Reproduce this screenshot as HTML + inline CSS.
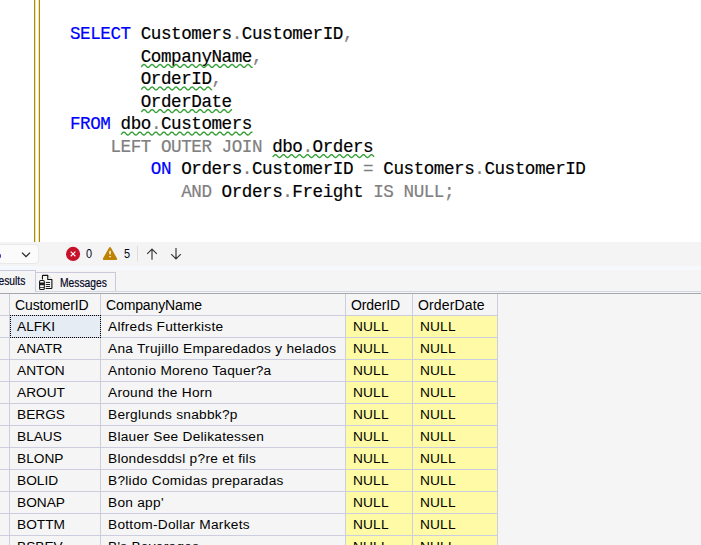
<!DOCTYPE html>
<html>
<head>
<meta charset="utf-8">
<title>SQL Query</title>
<style>
html,body{margin:0;padding:0;}
body{width:701px;height:545px;overflow:hidden;background:#fff;position:relative;font-family:"Liberation Sans",sans-serif;}
#editor{position:absolute;left:0;top:0;width:701px;height:242px;background:#fff;overflow:hidden;}
#bar{position:absolute;left:34px;top:0;width:4px;height:242px;border-left:1px solid #ae8b00;border-right:1px solid #ae8b00;background:linear-gradient(to right,#efe3b0 0,#efe3b0 1px,#fff 1px,#fff 3px,#efe3b0 3px,#efe3b0 4px);}
#code{position:absolute;left:70px;top:23.0px;margin:0;font-family:"Liberation Mono","DejaVu Sans Mono",monospace;font-size:17.6px;letter-spacing:-0.452px;line-height:22.54px;color:#000;white-space:pre;-webkit-text-stroke:0.18px;}
#code .k{color:#0000ff;}
#code .g{color:#808080;}
#status{position:absolute;left:0;top:242px;width:701px;height:24px;background:#f4f4f4;}
.num{position:absolute;top:4.2px;font-size:13px;color:#04041c;transform-origin:0 0;transform:scaleX(0.84);}
#band{position:absolute;left:0;top:266px;width:701px;height:4px;background:#f5f8fc;}
#combo{position:absolute;left:-6px;top:2px;width:45px;height:20px;border:1px solid #e9e9e9;border-radius:4px;background:#fbfbfb;box-sizing:border-box;}
#tabs{position:absolute;left:0;top:270px;width:701px;height:23px;background:#f5f5f5;}
.tab{position:absolute;box-sizing:border-box;border:1px solid #c8cadc;border-bottom:none;font-size:12px;color:#050525;}
#t1{left:-12px;top:0px;width:48px;height:22px;background:#f5f5f5;}
#t2{left:35px;top:2px;width:81px;height:20px;background:#f5f5f5;}
.tab span{position:absolute;white-space:nowrap;-webkit-text-stroke:0.2px;transform-origin:0 0;transform:scaleX(0.857);}
#t1 span{left:2px;top:2.9px;}
#t2 span{left:24.2px;top:2.6px;}
#tline{position:absolute;left:36px;top:21px;width:665px;height:1px;background:#d4d6e4;}
#grid{position:absolute;left:0;top:293px;width:701px;height:252px;background:#f5f5f5;border-top:1px solid #a6a6ae;box-sizing:border-box;overflow:hidden;}
table{border-collapse:collapse;position:absolute;left:-1px;top:-1px;font-size:13.7px;letter-spacing:0.17px;color:#000;table-layout:fixed;}
td,th{border:1px solid #cdcde0;height:21px;padding:0 0 0 7px;white-space:nowrap;overflow:hidden;text-align:left;font-weight:normal;box-sizing:border-box;background:#f5f5f5;}
th{padding-left:5px;padding-top:3px;font-size:14px;letter-spacing:-0.12px;border-top:none;}
td.n{background:#fffaa5;}
td.sel{background:#e6ecf4;}
tr{height:22px;}
#focus{position:absolute;left:10px;top:21px;width:91px;height:23px;box-sizing:border-box;border:1px dotted #000;}
</style>
</head>
<body>
<div id="editor">
<div id="bar"></div>
<pre id="code"><span class="k">SELECT</span> Customers<span class="g">.</span>CustomerID<span class="g">,</span>
       <span class="w">CompanyName</span><span class="g">,</span>
       <span class="w">OrderID</span><span class="g">,</span>
       <span class="w">OrderDate</span>
<span class="k">FROM</span> <span class="w">dbo<span class="g">.</span>Customers</span>
    <span class="g">LEFT OUTER JOIN</span> <span class="w">dbo<span class="g">.</span>Orders</span>
        <span class="k">ON</span> Orders<span class="g">.</span>CustomerID <span class="g">=</span> Customers<span class="g">.</span>CustomerID
           <span class="g">AND</span> Orders<span class="g">.</span>Freight <span class="g">IS NULL;</span></pre>
<svg width="701" height="242" style="position:absolute;left:0;top:0">
<polyline points="141.17,66.88 141.67,66.39 142.17,65.83 142.67,65.28 143.17,64.84 143.67,64.56 144.17,64.49 144.67,64.65 145.17,65.00 145.67,65.49 146.17,66.05 146.67,66.60 147.17,67.04 147.67,67.32 148.17,67.39 148.67,67.23 149.17,66.88 149.67,66.39 150.17,65.83 150.67,65.28 151.17,64.84 151.67,64.56 152.17,64.49 152.67,64.65 153.17,65.00 153.67,65.49 154.17,66.05 154.67,66.60 155.17,67.04 155.67,67.32 156.17,67.39 156.67,67.23 157.17,66.88 157.67,66.39 158.17,65.83 158.67,65.28 159.17,64.84 159.67,64.56 160.17,64.49 160.67,64.65 161.17,65.00 161.67,65.49 162.17,66.05 162.67,66.60 163.17,67.04 163.67,67.32 164.17,67.39 164.67,67.23 165.17,66.88 165.67,66.39 166.17,65.83 166.67,65.28 167.17,64.84 167.67,64.56 168.17,64.49 168.67,64.65 169.17,65.00 169.67,65.49 170.17,66.05 170.67,66.60 171.17,67.04 171.67,67.32 172.17,67.39 172.67,67.23 173.17,66.88 173.67,66.39 174.17,65.83 174.67,65.28 175.17,64.84 175.67,64.56 176.17,64.49 176.67,64.65 177.17,65.00 177.67,65.49 178.17,66.05 178.67,66.60 179.17,67.04 179.67,67.32 180.17,67.39 180.67,67.23 181.17,66.88 181.67,66.39 182.17,65.83 182.67,65.28 183.17,64.84 183.67,64.56 184.17,64.49 184.67,64.65 185.17,65.00 185.67,65.49 186.17,66.05 186.67,66.60 187.17,67.04 187.67,67.32 188.17,67.39 188.67,67.23 189.17,66.88 189.67,66.39 190.17,65.83 190.67,65.28 191.17,64.84 191.67,64.56 192.17,64.49 192.67,64.65 193.17,65.00 193.67,65.49 194.17,66.05 194.67,66.60 195.17,67.04 195.67,67.32 196.17,67.39 196.67,67.23 197.17,66.88 197.67,66.39 198.17,65.83 198.67,65.28 199.17,64.84 199.67,64.56 200.17,64.49 200.67,64.65 201.17,65.00 201.67,65.49 202.17,66.05 202.67,66.60 203.17,67.04 203.67,67.32 204.17,67.39 204.67,67.23 205.17,66.88 205.67,66.39 206.17,65.83 206.67,65.28 207.17,64.84 207.67,64.56 208.17,64.49 208.67,64.65 209.17,65.00 209.67,65.49 210.17,66.05 210.67,66.60 211.17,67.04 211.67,67.32 212.17,67.39 212.67,67.23 213.17,66.88 213.67,66.39 214.17,65.83 214.67,65.28 215.17,64.84 215.67,64.56 216.17,64.49 216.67,64.65 217.17,65.00 217.67,65.49 218.17,66.05 218.67,66.60 219.17,67.04 219.67,67.32 220.17,67.39 220.67,67.23 221.17,66.88 221.67,66.39 222.17,65.83 222.67,65.28 223.17,64.84 223.67,64.56 224.17,64.49 224.67,64.65 225.17,65.00 225.67,65.49 226.17,66.05 226.67,66.60 227.17,67.04 227.67,67.32 228.17,67.39 228.67,67.23 229.17,66.88 229.67,66.39 230.17,65.83 230.67,65.28 231.17,64.84 231.67,64.56 232.17,64.49 232.67,64.65 233.17,65.00 233.67,65.49 234.17,66.05 234.67,66.60 235.17,67.04 235.67,67.32 236.17,67.39 236.67,67.23 237.17,66.88 237.67,66.39 238.17,65.83 238.67,65.28 239.17,64.84 239.67,64.56 240.17,64.49 240.67,64.65 241.17,65.00 241.67,65.49 242.17,66.05 242.67,66.60 243.17,67.04 243.67,67.32 244.17,67.39 244.67,67.23 245.17,66.88 245.67,66.39 246.17,65.83 246.67,65.28 247.17,64.84 247.67,64.56 248.17,64.49 248.67,64.65 249.17,65.00 249.67,65.49 250.17,66.05 250.67,66.60 251.17,67.04 251.67,67.32 252.17,67.39 252.67,67.23" fill="none" stroke="#3aa13a" stroke-width="1.4" stroke-linejoin="round"/>
<polyline points="141.17,89.42 141.67,88.93 142.17,88.37 142.67,87.82 143.17,87.38 143.67,87.10 144.17,87.03 144.67,87.19 145.17,87.54 145.67,88.03 146.17,88.59 146.67,89.14 147.17,89.58 147.67,89.86 148.17,89.93 148.67,89.77 149.17,89.42 149.67,88.93 150.17,88.37 150.67,87.82 151.17,87.38 151.67,87.10 152.17,87.03 152.67,87.19 153.17,87.54 153.67,88.03 154.17,88.59 154.67,89.14 155.17,89.58 155.67,89.86 156.17,89.93 156.67,89.77 157.17,89.42 157.67,88.93 158.17,88.37 158.67,87.82 159.17,87.38 159.67,87.10 160.17,87.03 160.67,87.19 161.17,87.54 161.67,88.03 162.17,88.59 162.67,89.14 163.17,89.58 163.67,89.86 164.17,89.93 164.67,89.77 165.17,89.42 165.67,88.93 166.17,88.37 166.67,87.82 167.17,87.38 167.67,87.10 168.17,87.03 168.67,87.19 169.17,87.54 169.67,88.03 170.17,88.59 170.67,89.14 171.17,89.58 171.67,89.86 172.17,89.93 172.67,89.77 173.17,89.42 173.67,88.93 174.17,88.37 174.67,87.82 175.17,87.38 175.67,87.10 176.17,87.03 176.67,87.19 177.17,87.54 177.67,88.03 178.17,88.59 178.67,89.14 179.17,89.58 179.67,89.86 180.17,89.93 180.67,89.77 181.17,89.42 181.67,88.93 182.17,88.37 182.67,87.82 183.17,87.38 183.67,87.10 184.17,87.03 184.67,87.19 185.17,87.54 185.67,88.03 186.17,88.59 186.67,89.14 187.17,89.58 187.67,89.86 188.17,89.93 188.67,89.77 189.17,89.42 189.67,88.93 190.17,88.37 190.67,87.82 191.17,87.38 191.67,87.10 192.17,87.03 192.67,87.19 193.17,87.54 193.67,88.03 194.17,88.59 194.67,89.14 195.17,89.58 195.67,89.86 196.17,89.93 196.67,89.77 197.17,89.42 197.67,88.93 198.17,88.37 198.67,87.82 199.17,87.38 199.67,87.10 200.17,87.03 200.67,87.19 201.17,87.54 201.67,88.03 202.17,88.59 202.67,89.14 203.17,89.58 203.67,89.86 204.17,89.93 204.67,89.77 205.17,89.42 205.67,88.93 206.17,88.37 206.67,87.82 207.17,87.38 207.67,87.10 208.17,87.03 208.67,87.19 209.17,87.54 209.67,88.03 210.17,88.59 210.67,89.14 211.17,89.58 211.67,89.86 212.17,89.93" fill="none" stroke="#3aa13a" stroke-width="1.4" stroke-linejoin="round"/>
<polyline points="141.17,111.96 141.67,111.47 142.17,110.91 142.67,110.36 143.17,109.92 143.67,109.64 144.17,109.57 144.67,109.73 145.17,110.08 145.67,110.57 146.17,111.13 146.67,111.68 147.17,112.12 147.67,112.40 148.17,112.47 148.67,112.31 149.17,111.96 149.67,111.47 150.17,110.91 150.67,110.36 151.17,109.92 151.67,109.64 152.17,109.57 152.67,109.73 153.17,110.08 153.67,110.57 154.17,111.13 154.67,111.68 155.17,112.12 155.67,112.40 156.17,112.47 156.67,112.31 157.17,111.96 157.67,111.47 158.17,110.91 158.67,110.36 159.17,109.92 159.67,109.64 160.17,109.57 160.67,109.73 161.17,110.08 161.67,110.57 162.17,111.13 162.67,111.68 163.17,112.12 163.67,112.40 164.17,112.47 164.67,112.31 165.17,111.96 165.67,111.47 166.17,110.91 166.67,110.36 167.17,109.92 167.67,109.64 168.17,109.57 168.67,109.73 169.17,110.08 169.67,110.57 170.17,111.13 170.67,111.68 171.17,112.12 171.67,112.40 172.17,112.47 172.67,112.31 173.17,111.96 173.67,111.47 174.17,110.91 174.67,110.36 175.17,109.92 175.67,109.64 176.17,109.57 176.67,109.73 177.17,110.08 177.67,110.57 178.17,111.13 178.67,111.68 179.17,112.12 179.67,112.40 180.17,112.47 180.67,112.31 181.17,111.96 181.67,111.47 182.17,110.91 182.67,110.36 183.17,109.92 183.67,109.64 184.17,109.57 184.67,109.73 185.17,110.08 185.67,110.57 186.17,111.13 186.67,111.68 187.17,112.12 187.67,112.40 188.17,112.47 188.67,112.31 189.17,111.96 189.67,111.47 190.17,110.91 190.67,110.36 191.17,109.92 191.67,109.64 192.17,109.57 192.67,109.73 193.17,110.08 193.67,110.57 194.17,111.13 194.67,111.68 195.17,112.12 195.67,112.40 196.17,112.47 196.67,112.31 197.17,111.96 197.67,111.47 198.17,110.91 198.67,110.36 199.17,109.92 199.67,109.64 200.17,109.57 200.67,109.73 201.17,110.08 201.67,110.57 202.17,111.13 202.67,111.68 203.17,112.12 203.67,112.40 204.17,112.47 204.67,112.31 205.17,111.96 205.67,111.47 206.17,110.91 206.67,110.36 207.17,109.92 207.67,109.64 208.17,109.57 208.67,109.73 209.17,110.08 209.67,110.57 210.17,111.13 210.67,111.68 211.17,112.12 211.67,112.40 212.17,112.47 212.67,112.31 213.17,111.96 213.67,111.47 214.17,110.91 214.67,110.36 215.17,109.92 215.67,109.64 216.17,109.57 216.67,109.73 217.17,110.08 217.67,110.57 218.17,111.13 218.67,111.68 219.17,112.12 219.67,112.40 220.17,112.47 220.67,112.31 221.17,111.96 221.67,111.47 222.17,110.91 222.67,110.36 223.17,109.92 223.67,109.64 224.17,109.57 224.67,109.73 225.17,110.08 225.67,110.57 226.17,111.13 226.67,111.68 227.17,112.12 227.67,112.40 228.17,112.47 228.67,112.31 229.17,111.96 229.67,111.47 230.17,110.91 230.67,110.36 231.17,109.92 231.67,109.64 232.17,109.57" fill="none" stroke="#3aa13a" stroke-width="1.4" stroke-linejoin="round"/>
<polyline points="120.95,134.50 121.45,134.01 121.95,133.45 122.45,132.90 122.95,132.46 123.45,132.18 123.95,132.11 124.45,132.27 124.95,132.62 125.45,133.11 125.95,133.67 126.45,134.22 126.95,134.66 127.45,134.94 127.95,135.01 128.45,134.85 128.95,134.50 129.45,134.01 129.95,133.45 130.45,132.90 130.95,132.46 131.45,132.18 131.95,132.11 132.45,132.27 132.95,132.62 133.45,133.11 133.95,133.67 134.45,134.22 134.95,134.66 135.45,134.94 135.95,135.01 136.45,134.85 136.95,134.50 137.45,134.01 137.95,133.45 138.45,132.90 138.95,132.46 139.45,132.18 139.95,132.11 140.45,132.27 140.95,132.62 141.45,133.11 141.95,133.67 142.45,134.22 142.95,134.66 143.45,134.94 143.95,135.01 144.45,134.85 144.95,134.50 145.45,134.01 145.95,133.45 146.45,132.90 146.95,132.46 147.45,132.18 147.95,132.11 148.45,132.27 148.95,132.62 149.45,133.11 149.95,133.67 150.45,134.22 150.95,134.66 151.45,134.94 151.95,135.01 152.45,134.85 152.95,134.50 153.45,134.01 153.95,133.45 154.45,132.90 154.95,132.46 155.45,132.18 155.95,132.11 156.45,132.27 156.95,132.62 157.45,133.11 157.95,133.67 158.45,134.22 158.95,134.66 159.45,134.94 159.95,135.01 160.45,134.85 160.95,134.50 161.45,134.01 161.95,133.45 162.45,132.90 162.95,132.46 163.45,132.18 163.95,132.11 164.45,132.27 164.95,132.62 165.45,133.11 165.95,133.67 166.45,134.22 166.95,134.66 167.45,134.94 167.95,135.01 168.45,134.85 168.95,134.50 169.45,134.01 169.95,133.45 170.45,132.90 170.95,132.46 171.45,132.18 171.95,132.11 172.45,132.27 172.95,132.62 173.45,133.11 173.95,133.67 174.45,134.22 174.95,134.66 175.45,134.94 175.95,135.01 176.45,134.85 176.95,134.50 177.45,134.01 177.95,133.45 178.45,132.90 178.95,132.46 179.45,132.18 179.95,132.11 180.45,132.27 180.95,132.62 181.45,133.11 181.95,133.67 182.45,134.22 182.95,134.66 183.45,134.94 183.95,135.01 184.45,134.85 184.95,134.50 185.45,134.01 185.95,133.45 186.45,132.90 186.95,132.46 187.45,132.18 187.95,132.11 188.45,132.27 188.95,132.62 189.45,133.11 189.95,133.67 190.45,134.22 190.95,134.66 191.45,134.94 191.95,135.01 192.45,134.85 192.95,134.50 193.45,134.01 193.95,133.45 194.45,132.90 194.95,132.46 195.45,132.18 195.95,132.11 196.45,132.27 196.95,132.62 197.45,133.11 197.95,133.67 198.45,134.22 198.95,134.66 199.45,134.94 199.95,135.01 200.45,134.85 200.95,134.50 201.45,134.01 201.95,133.45 202.45,132.90 202.95,132.46 203.45,132.18 203.95,132.11 204.45,132.27 204.95,132.62 205.45,133.11 205.95,133.67 206.45,134.22 206.95,134.66 207.45,134.94 207.95,135.01 208.45,134.85 208.95,134.50 209.45,134.01 209.95,133.45 210.45,132.90 210.95,132.46 211.45,132.18 211.95,132.11 212.45,132.27 212.95,132.62 213.45,133.11 213.95,133.67 214.45,134.22 214.95,134.66 215.45,134.94 215.95,135.01 216.45,134.85 216.95,134.50 217.45,134.01 217.95,133.45 218.45,132.90 218.95,132.46 219.45,132.18 219.95,132.11 220.45,132.27 220.95,132.62 221.45,133.11 221.95,133.67 222.45,134.22 222.95,134.66 223.45,134.94 223.95,135.01 224.45,134.85 224.95,134.50 225.45,134.01 225.95,133.45 226.45,132.90 226.95,132.46 227.45,132.18 227.95,132.11 228.45,132.27 228.95,132.62 229.45,133.11 229.95,133.67 230.45,134.22 230.95,134.66 231.45,134.94 231.95,135.01 232.45,134.85 232.95,134.50 233.45,134.01 233.95,133.45 234.45,132.90 234.95,132.46 235.45,132.18 235.95,132.11 236.45,132.27 236.95,132.62 237.45,133.11 237.95,133.67 238.45,134.22 238.95,134.66 239.45,134.94 239.95,135.01 240.45,134.85 240.95,134.50 241.45,134.01 241.95,133.45 242.45,132.90 242.95,132.46 243.45,132.18 243.95,132.11 244.45,132.27 244.95,132.62 245.45,133.11 245.95,133.67 246.45,134.22 246.95,134.66 247.45,134.94 247.95,135.01 248.45,134.85 248.95,134.50 249.45,134.01 249.95,133.45 250.45,132.90 250.95,132.46 251.45,132.18 251.95,132.11 252.45,132.27" fill="none" stroke="#3aa13a" stroke-width="1.4" stroke-linejoin="round"/>
<polyline points="272.60,157.04 273.10,156.55 273.60,155.99 274.10,155.44 274.60,155.00 275.10,154.72 275.60,154.65 276.10,154.81 276.60,155.16 277.10,155.65 277.60,156.21 278.10,156.76 278.60,157.20 279.10,157.48 279.60,157.55 280.10,157.39 280.60,157.04 281.10,156.55 281.60,155.99 282.10,155.44 282.60,155.00 283.10,154.72 283.60,154.65 284.10,154.81 284.60,155.16 285.10,155.65 285.60,156.21 286.10,156.76 286.60,157.20 287.10,157.48 287.60,157.55 288.10,157.39 288.60,157.04 289.10,156.55 289.60,155.99 290.10,155.44 290.60,155.00 291.10,154.72 291.60,154.65 292.10,154.81 292.60,155.16 293.10,155.65 293.60,156.21 294.10,156.76 294.60,157.20 295.10,157.48 295.60,157.55 296.10,157.39 296.60,157.04 297.10,156.55 297.60,155.99 298.10,155.44 298.60,155.00 299.10,154.72 299.60,154.65 300.10,154.81 300.60,155.16 301.10,155.65 301.60,156.21 302.10,156.76 302.60,157.20 303.10,157.48 303.60,157.55 304.10,157.39 304.60,157.04 305.10,156.55 305.60,155.99 306.10,155.44 306.60,155.00 307.10,154.72 307.60,154.65 308.10,154.81 308.60,155.16 309.10,155.65 309.60,156.21 310.10,156.76 310.60,157.20 311.10,157.48 311.60,157.55 312.10,157.39 312.60,157.04 313.10,156.55 313.60,155.99 314.10,155.44 314.60,155.00 315.10,154.72 315.60,154.65 316.10,154.81 316.60,155.16 317.10,155.65 317.60,156.21 318.10,156.76 318.60,157.20 319.10,157.48 319.60,157.55 320.10,157.39 320.60,157.04 321.10,156.55 321.60,155.99 322.10,155.44 322.60,155.00 323.10,154.72 323.60,154.65 324.10,154.81 324.60,155.16 325.10,155.65 325.60,156.21 326.10,156.76 326.60,157.20 327.10,157.48 327.60,157.55 328.10,157.39 328.60,157.04 329.10,156.55 329.60,155.99 330.10,155.44 330.60,155.00 331.10,154.72 331.60,154.65 332.10,154.81 332.60,155.16 333.10,155.65 333.60,156.21 334.10,156.76 334.60,157.20 335.10,157.48 335.60,157.55 336.10,157.39 336.60,157.04 337.10,156.55 337.60,155.99 338.10,155.44 338.60,155.00 339.10,154.72 339.60,154.65 340.10,154.81 340.60,155.16 341.10,155.65 341.60,156.21 342.10,156.76 342.60,157.20 343.10,157.48 343.60,157.55 344.10,157.39 344.60,157.04 345.10,156.55 345.60,155.99 346.10,155.44 346.60,155.00 347.10,154.72 347.60,154.65 348.10,154.81 348.60,155.16 349.10,155.65 349.60,156.21 350.10,156.76 350.60,157.20 351.10,157.48 351.60,157.55 352.10,157.39 352.60,157.04 353.10,156.55 353.60,155.99 354.10,155.44 354.60,155.00 355.10,154.72 355.60,154.65 356.10,154.81 356.60,155.16 357.10,155.65 357.60,156.21 358.10,156.76 358.60,157.20 359.10,157.48 359.60,157.55 360.10,157.39 360.60,157.04 361.10,156.55 361.60,155.99 362.10,155.44 362.60,155.00 363.10,154.72 363.60,154.65 364.10,154.81 364.60,155.16 365.10,155.65 365.60,156.21 366.10,156.76 366.60,157.20 367.10,157.48 367.60,157.55 368.10,157.39 368.60,157.04 369.10,156.55 369.60,155.99 370.10,155.44 370.60,155.00 371.10,154.72 371.60,154.65 372.10,154.81 372.60,155.16 373.10,155.65 373.60,156.21 374.10,156.76" fill="none" stroke="#3aa13a" stroke-width="1.4" stroke-linejoin="round"/>
</svg>
</div>
<div id="status">
<div id="combo"></div>
<svg width="701" height="24" style="position:absolute;left:0;top:0">
<rect x="0" y="12.3" width="1" height="3.4" fill="#4a3cc8"/>
<path d="M22 10.6 L26 14.6 L30 10.6" fill="none" stroke="#2a2a2a" stroke-width="1.3"/>
<circle cx="73.05" cy="11.9" r="7.05" fill="#c7102a"/>
<path d="M70.7 9.55 L75.4 14.25 M75.4 9.55 L70.7 14.25" stroke="#fff" stroke-width="1.1"/>
<path d="M110 6 L116.2 17 L103.8 17 Z" fill="#bf8303" stroke="#bf8303" stroke-width="2" stroke-linejoin="round"/>
<rect x="109.2" y="8.8" width="1.7" height="3.6" fill="#f3e6c8"/>
<rect x="109.2" y="14" width="1.7" height="1.2" fill="#f3e6c8"/>
<rect x="137" y="4" width="1" height="15.5" fill="#dedede"/>
<path d="M152 17.7 L152 7 M147.2 11.8 L152 7 L156.8 11.8" fill="none" stroke="#3a3a3a" stroke-width="1.2"/>
<path d="M176 6.1 L176 17 M171.2 12.2 L176 17 L180.8 12.2" fill="none" stroke="#3a3a3a" stroke-width="1.2"/>
</svg>
<span class="num" style="left:85.9px;">0</span>
<span class="num" style="left:123.6px;">5</span>
</div>
<div id="band"></div>
<div id="tabs">
<div class="tab" id="t1"><span>Results</span></div>
<div class="tab" id="t2"><span>Messages</span>
<svg width="20" height="20" style="position:absolute;left:0px;top:-1px">
<path d="M11.75 3.3 L16 7.5" fill="none" stroke="#c4c4c4" stroke-width="0.9"/>
<path d="M6.45 6.9 L6.45 4 Q6.45 3.4 7.1 3.4 L11.75 3.4 L11.75 7.5 L15.9 7.5 L15.9 16 Q15.9 16.55 15.3 16.55 L10.1 16.55" fill="none" stroke="#111" stroke-width="1.1" stroke-linecap="round" stroke-linejoin="round"/>
<path d="M10.2 10.45 H13.7 M10.2 12.5 H13.7 M10.2 14.5 H13.7" stroke="#111" stroke-width="0.95" stroke-linecap="round"/>
<rect x="3.6" y="8.55" width="4.7" height="8.9" rx="1" fill="#fff" stroke="#111" stroke-width="1.05"/>
<rect x="3.6" y="10.5" width="4.7" height="2.75" fill="#1c1c1c"/>
<path d="M3.6 15.5 H8.3" stroke="#111" stroke-width="0.75"/>
</svg>
</div>
<div id="tline"></div>
</div>
<div id="grid">
<table>
<colgroup><col style="width:10px"><col style="width:91px"><col style="width:245px"><col style="width:67px"><col style="width:85px"></colgroup>
<tr><th></th><th>CustomerID</th><th>CompanyName</th><th>OrderID</th><th style="letter-spacing:0.15px">OrderDate</th></tr>
<tr><td></td><td class="sel" style="letter-spacing:0">ALFKI</td><td style="letter-spacing:0.27px">Alfreds Futterkiste</td><td class="n">NULL</td><td class="n">NULL</td></tr>
<tr><td></td><td style="letter-spacing:0">ANATR</td><td style="letter-spacing:0.27px">Ana Trujillo Emparedados y helados</td><td class="n">NULL</td><td class="n">NULL</td></tr>
<tr><td></td><td style="letter-spacing:0">ANTON</td><td style="letter-spacing:0.27px">Antonio Moreno Taquer?a</td><td class="n">NULL</td><td class="n">NULL</td></tr>
<tr><td></td><td style="letter-spacing:0">AROUT</td><td style="letter-spacing:0.27px">Around the Horn</td><td class="n">NULL</td><td class="n">NULL</td></tr>
<tr><td></td><td style="letter-spacing:0">BERGS</td><td style="letter-spacing:0.27px">Berglunds snabbk?p</td><td class="n">NULL</td><td class="n">NULL</td></tr>
<tr><td></td><td style="letter-spacing:0">BLAUS</td><td style="letter-spacing:0.27px">Blauer See Delikatessen</td><td class="n">NULL</td><td class="n">NULL</td></tr>
<tr><td></td><td style="letter-spacing:0">BLONP</td><td style="letter-spacing:0.27px">Blondesddsl p?re et fils</td><td class="n">NULL</td><td class="n">NULL</td></tr>
<tr><td></td><td style="letter-spacing:0">BOLID</td><td style="letter-spacing:0.27px">B?lido Comidas preparadas</td><td class="n">NULL</td><td class="n">NULL</td></tr>
<tr><td></td><td style="letter-spacing:0">BONAP</td><td style="letter-spacing:0.27px">Bon app'</td><td class="n">NULL</td><td class="n">NULL</td></tr>
<tr><td></td><td style="letter-spacing:0">BOTTM</td><td style="letter-spacing:0.27px">Bottom-Dollar Markets</td><td class="n">NULL</td><td class="n">NULL</td></tr>
<tr><td></td><td style="letter-spacing:0">BSBEV</td><td style="letter-spacing:0.27px">B's Beverages</td><td class="n">NULL</td><td class="n">NULL</td></tr>
</table>
<div id="focus"></div>
</div>
</body>
</html>
